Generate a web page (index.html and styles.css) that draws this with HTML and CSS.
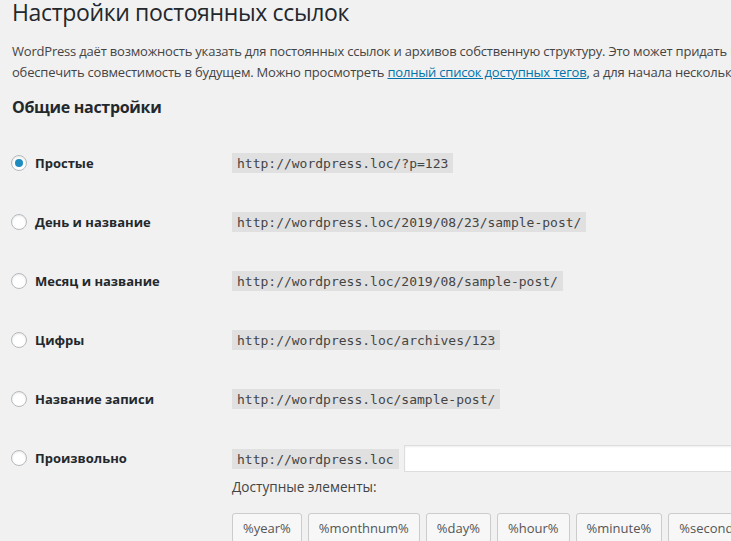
FILE: index.html
```html
<!DOCTYPE html>
<html lang="ru">
<head>
<meta charset="utf-8">
<title>Настройки постоянных ссылок</title>
<link rel="stylesheet" href="styles.css">
</head>
<body>
<div class="wrap">
  <h1 class="page-title">Настройки постоянных ссылок</h1>
  <p class="intro">WordPress даёт возможность указать для постоянных ссылок и архивов собственную структуру. Это может придать вашим ссылкам более эстетичный вид, сделать их удобнее в использовании и<br>обеспечить совместимость в будущем. Можно просмотреть <a href="#">полный список доступных тегов</a>, а для начала несколько примеров.</p>
  <h2 class="section-title">Общие настройки</h2>

  <div class="form-table">
    <div class="row">
      <div class="th"><span class="radio checked"></span><span class="label">Простые</span></div>
      <div class="td"><code>http://wordpress.loc/?p=123</code></div>
    </div>
    <div class="row">
      <div class="th"><span class="radio"></span><span class="label">День и название</span></div>
      <div class="td"><code>http://wordpress.loc/2019/08/23/sample-post/</code></div>
    </div>
    <div class="row">
      <div class="th"><span class="radio"></span><span class="label">Месяц и название</span></div>
      <div class="td"><code>http://wordpress.loc/2019/08/sample-post/</code></div>
    </div>
    <div class="row">
      <div class="th"><span class="radio"></span><span class="label">Цифры</span></div>
      <div class="td"><code>http://wordpress.loc/archives/123</code></div>
    </div>
    <div class="row">
      <div class="th"><span class="radio"></span><span class="label">Название записи</span></div>
      <div class="td"><code>http://wordpress.loc/sample-post/</code></div>
    </div>
    <div class="row custom">
      <div class="th"><span class="radio"></span><span class="label">Произвольно</span></div>
      <div class="td-custom">
        <div class="custom-line"><code>http://wordpress.loc</code><span class="text-input"></span></div>
        <p class="available">Доступные элементы:</p>
        <div class="tags">
          <span class="btn">%year%</span>
          <span class="btn">%monthnum%</span>
          <span class="btn">%day%</span>
          <span class="btn">%hour%</span>
          <span class="btn">%minute%</span>
          <span class="btn">%second%</span>
          <span class="btn">%post_id%</span>
        </div>
      </div>
    </div>
  </div>
</div>
</body>
</html>
```
FILE: styles.css
```css
html, body {
  margin: 0;
  padding: 0;
  background: #f1f1f1;
  overflow: hidden;
}
body {
  font-family: "Open Sans", "Noto Sans", sans-serif;
  font-size: 14px;
  color: #444;
}
.wrap {
  width: 1400px;
  padding-left: 12px;
}
.page-title {
  margin: 0;
  font-size: 23px;
  font-weight: 400;
  line-height: 25px;
  letter-spacing: -0.35px;
  color: #23282d;
}
.intro {
  margin: 16px 0 0;
  font-size: 13px;
  line-height: 21px;
  letter-spacing: -0.2px;
  white-space: nowrap;
}
.intro a {
  color: #0073aa;
  text-decoration: underline;
}
.section-title {
  margin: 12px 0 0;
  font-size: 16px;
  line-height: 24px;
  font-weight: 700;
  letter-spacing: -0.3px;
  color: #23282d;
}
.form-table {
  margin-top: 14.5px;
}
.row {
  display: flex;
  height: 59px;
}
.row.custom {
  height: auto;
}
.th {
  width: 220px;
  height: 59px;
  display: flex;
  align-items: center;
  flex-shrink: 0;
}
.radio {
  width: 14px;
  height: 14px;
  border: 1px solid #b4b9be;
  border-radius: 50%;
  background: #fff;
  box-shadow: inset 0 1px 2px rgba(0,0,0,.1);
  margin-left: -1px;
  margin-right: 8px;
  display: flex;
  align-items: center;
  justify-content: center;
  flex-shrink: 0;
}
.radio.checked::after {
  content: "";
  width: 8px;
  height: 8px;
  border-radius: 50%;
  background: #1e8cbe;
}
.label {
  font-size: 13px;
  font-weight: 700;
  color: #23282d;
}
.td {
  display: flex;
  align-items: center;
}
code {
  display: inline-block;
  font-family: "DejaVu Sans Mono", monospace;
  font-size: 13px;
  line-height: 15px;
  padding: 3px 5px 2px;
  background: #e0e0e0;
  color: #444;
}
.td-custom {
  padding-top: 16.5px;
}
.custom-line {
  display: flex;
  align-items: center;
  height: 27px;
}
.text-input {
  display: block;
  width: 350px;
  height: 25px;
  margin-left: 5px;
  background: #fff;
  border: 1px solid #ddd;
  box-shadow: inset 0 1px 2px rgba(0,0,0,.07);
}
.available {
  margin: 4px 0 0;
  font-size: 13.6px;
  line-height: 21px;
  color: #444;
}
.tags {
  margin-top: 16px;
  display: flex;
  gap: 6px;
}
.btn {
  display: block;
  height: 28px;
  line-height: 28px;
  padding: 0 10px;
  font-size: 13px;
  color: #555;
  background: #f7f7f7;
  border: 1px solid #ccc;
  border-radius: 3px;
  box-shadow: 0 1px 0 #ccc;
  white-space: nowrap;
}
```
